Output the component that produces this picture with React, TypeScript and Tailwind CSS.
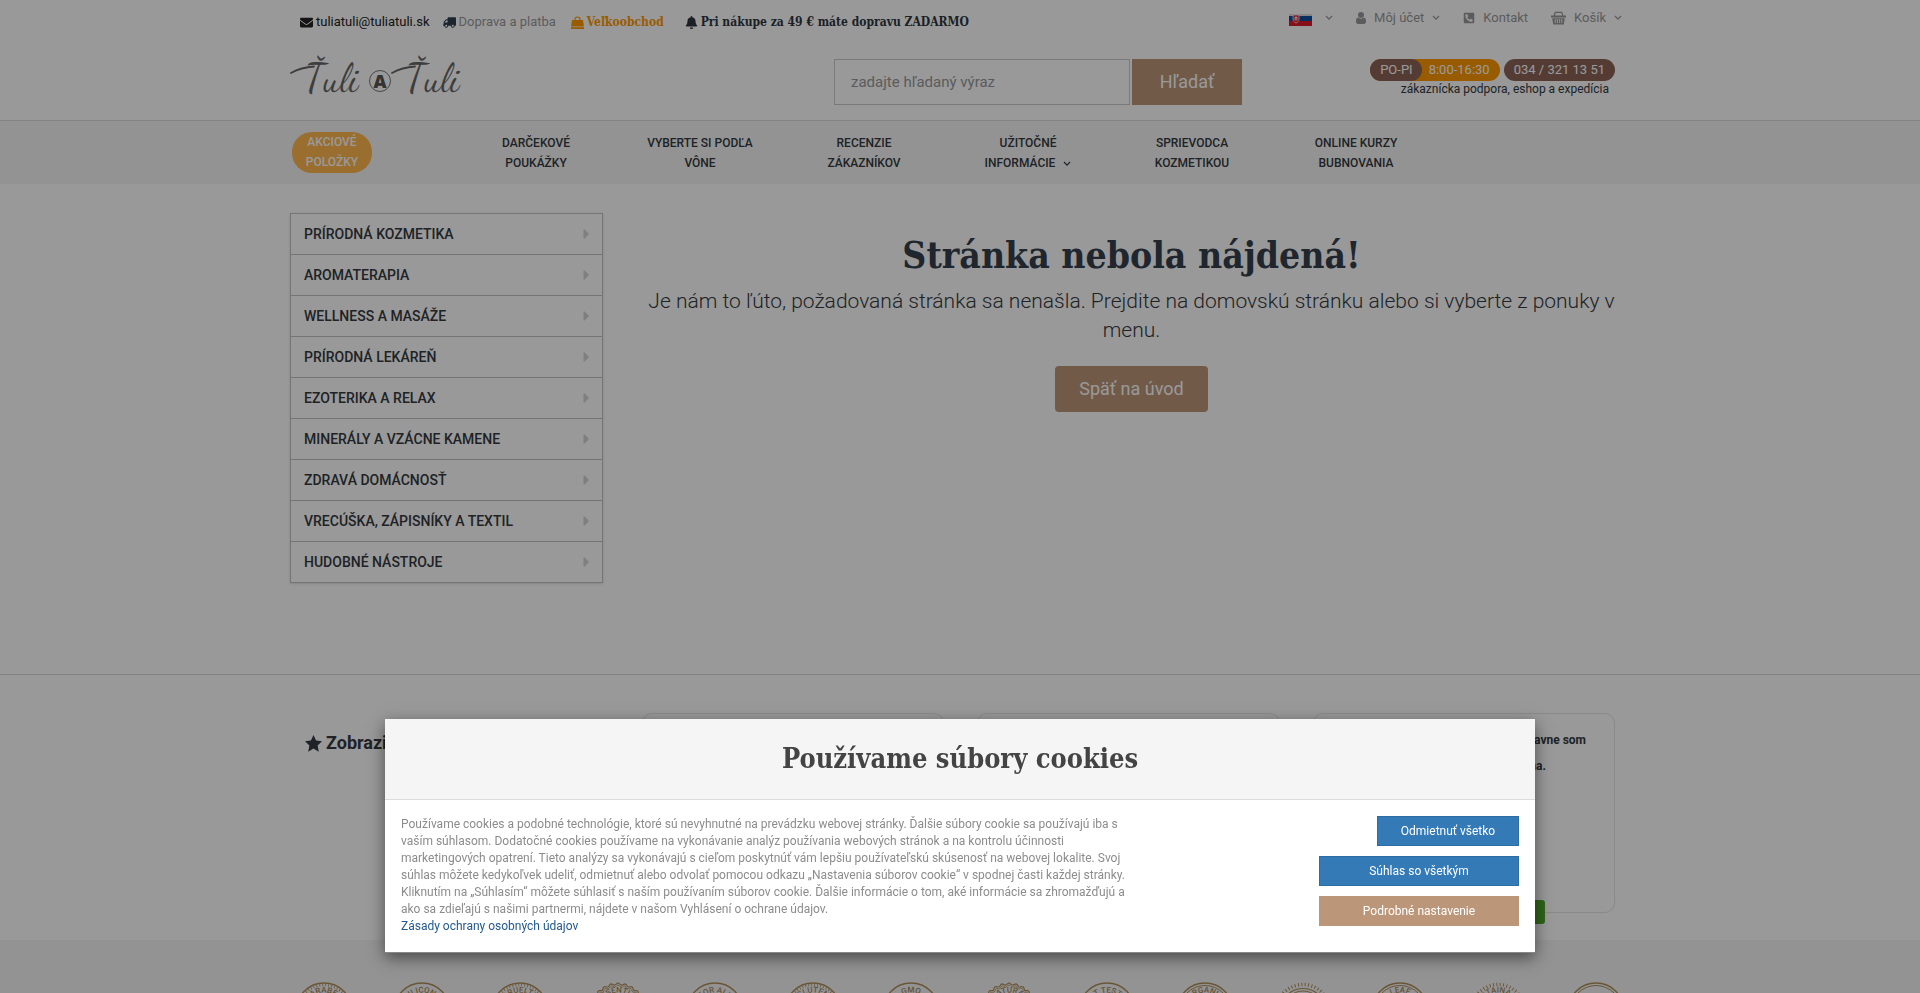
import type { ReactNode } from "react";
import { FaBell, FaCaretRight, FaEnvelope, FaPhoneSquareAlt, FaTruck } from "react-icons/fa";

const navItems = [
  { lines: ["Darčekové", "poukážky"] },
  { lines: ["Vyberte si podľa", "vône"] },
  { lines: ["Recenzie", "zákazníkov"] },
  { lines: ["Užitočné", "informácie"], dropdown: true },
  { lines: ["Sprievodca", "kozmetikou"] },
  { lines: ["Online kurzy", "bubnovania"] },
];

const categories = [
  "Prírodná kozmetika",
  "Aromaterapia",
  "Wellness a masáže",
  "Prírodná lekáreň",
  "Ezoterika a relax",
  "Minerály a vzácne kamene",
  "Zdravá domácnosť",
  "Vrecúška, zápisníky a textil",
  "Hudobné nástroje",
];

type SealEdge = "ring" | "ticks" | "wave" | "rays" | "double";

const seals: { label: string; edge: SealEdge }[] = [
  { label: "PARABEN", edge: "ticks" },
  { label: "SILICONE", edge: "ring" },
  { label: "CRUELTY", edge: "ticks" },
  { label: "ESSENTIAL", edge: "wave" },
  { label: "FOR ALL", edge: "ring" },
  { label: "GLUTEN", edge: "ticks" },
  { label: "GMO", edge: "ring" },
  { label: "NATURAL", edge: "wave" },
  { label: "NOT TESTED", edge: "ring" },
  { label: "ORGANIC", edge: "double" },
  { label: "", edge: "rays" },
  { label: "LEAF", edge: "double" },
  { label: "SUSTAINABLE", edge: "rays" },
  { label: "", edge: "double" },
];

export default function App() {
  return (
    <div className="h-screen overflow-hidden bg-white font-[Roboto,'Open_Sans',sans-serif] text-[#343a40]">
      <Header />
      <MainNav />
      <main>
        <div className="mx-auto flex max-w-[1370px] gap-[30px] px-[15px] pt-[29px] pb-[91px]">
          <Categories />
          <NotFound />
        </div>
        <Reviews />
      </main>
      <Seals />
      <div className="fixed inset-0 bg-black/40" />
      <CookieDialog />
    </div>
  );
}

function Header() {
  return (
    <header className="mx-auto h-[120px] max-w-[1370px] px-[15px]">
      <div className="flex h-[59px] items-start justify-between">
        <div className="flex items-center pt-3 pl-[10px] text-[13px] leading-5">
          <a href="#mail" className="flex items-center gap-[3px] text-[#222]">
            <FaEnvelope />
            tuliatuli@tuliatuli.sk
          </a>
          <a href="#doprava" className="ml-[13px] flex items-center gap-[3px] text-[#9a9a9a]">
            <FaTruck className="-scale-x-100 text-[#2c3e50]" />
            Doprava a platba
          </a>
          <a href="#velkoobchod" className="ml-[15px] flex items-center gap-[3px] font-['DejaVu_Serif_Condensed','DejaVu_Serif',serif] text-xs font-bold text-[#ff9800]">
            <Bag />
            Veľkoobchod
          </a>
          <span className="ml-[21px] flex items-center gap-[3px] font-['DejaVu_Serif_Condensed','DejaVu_Serif',serif] text-xs font-bold text-[#2e3640]">
            <FaBell className="text-[13px]" />
            Pri nákupe za 49 € máte dopravu ZADARMO
          </span>
        </div>
        <div className="flex items-center gap-[23px] pt-2 pr-2 text-[13px] leading-5 text-[#999]">
          <button type="button" aria-label="Jazyk" className="flex items-center gap-[13px]">
            <Flag />
            <AngleDown />
          </button>
          <button type="button" className="flex items-center gap-2">
            <User />
            Môj účet
            <AngleDown />
          </button>
          <a href="#kontakt" className="flex items-center gap-2">
            <FaPhoneSquareAlt className="h-3 w-3" />
            Kontakt
          </a>
          <button type="button" className="flex items-center gap-2">
            <Basket />
            Košík
            <AngleDown />
          </button>
        </div>
      </div>
      <div className="flex items-start">
        <a href="#home" aria-label="Ťuli a Ťuli">
          <Logo />
        </a>
        <form className="ml-[364px] flex gap-[2px]">
          <input
            type="text"
            aria-label="zadajte hľadaný výraz"
            placeholder="zadajte hľadaný výraz"
            className="h-[46px] w-[296px] border border-[#ccc] bg-white px-4 text-[15px] placeholder:text-[#999]"
          />
          <button type="button" className="h-[46px] w-[110px] bg-[#bc9678] text-lg text-white">
            Hľadať
          </button>
        </form>
        <div className="ml-auto pr-[15px] text-[13px] text-white">
          <div className="flex gap-1">
            <span className="flex rounded-full bg-[#ff9800]">
              <span className="rounded-full bg-[#8d6558] pr-[9px] pl-[10px] leading-[22px]">PO-PI</span>
              <span className="pr-[10px] pl-[7px] leading-[22px]">8:00-16:30</span>
            </span>
            <a href="#tel" className="rounded-full bg-[#8d6558] px-[10px] leading-[22px]">034 / 321 13 51</a>
          </div>
          <p className="pr-[6px] text-right text-xs leading-4 text-[#343a40]">zákaznícka podpora, eshop a expedícia</p>
        </div>
      </div>
    </header>
  );
}

function MainNav() {
  return (
    <nav className="border-t border-[#d9d9d9] bg-[#f6f6f6] text-xs leading-5 font-medium uppercase">
      <ul className="mx-auto flex h-[63px] max-w-[1370px] px-[15px] text-center">
        <li className="w-[164px] pt-[11px] pl-[2px]">
          <a href="#akcie" className="block h-[41px] w-[80px] rounded-[20px] bg-[#ffb74d] text-white">
            Akciové
            <br />
            položky
          </a>
        </li>
        {navItems.map(({ lines, dropdown }) => (
          <li key={lines[0]} className="w-[164px] pt-3">
            <a href="#menu">
              {lines[0]}
              <br />
              {lines[1]}
              {dropdown && <AngleDown className="ml-2 inline-block" />}
            </a>
          </li>
        ))}
      </ul>
    </nav>
  );
}

function Categories() {
  return (
    <aside className="w-[313px] shrink-0">
      <ul className="border border-b-0 border-[#c4c4c4] shadow-sm">
        {categories.map((name) => (
          <li key={name} className="border-b border-[#c4c4c4]">
            <a href="#kategoria" className="flex h-10 items-center justify-between pr-3 pl-[13px] text-sm font-medium uppercase">
              {name}
              <FaCaretRight className="h-4 w-[7px] text-[#d4d4d4]" />
            </a>
          </li>
        ))}
      </ul>
    </aside>
  );
}

function NotFound() {
  return (
    <section className="flex-1 pt-[19px] text-center">
      <h1 className="font-['DejaVu_Serif_Condensed','DejaVu_Serif',serif] text-[37px] leading-[46px] font-bold text-[#34404e]">
        Stránka nebola nájdená!
      </h1>
      <p className="mt-[9px] text-[21px] leading-[29px] font-light">
        Je nám to ľúto, požadovaná stránka sa nenašla. Prejdite na domovskú stránku alebo si vyberte z ponuky v menu.
      </p>
      <a href="#home" className="mt-[21px] inline-block rounded bg-[#bc9678] px-6 text-lg leading-[46px] text-white">
        Späť na úvod
      </a>
    </section>
  );
}

function Reviews() {
  return (
    <section className="border-t border-[#d9d9d9]">
      <div className="mx-auto flex max-w-[1370px] px-[15px] pt-[38px] pb-[27px]">
        <h2 className="flex w-[352px] shrink-0 items-center gap-1 self-start pt-[18px] pl-[15px] text-lg leading-6 font-bold">
          <Star />
          Zobraziť
        </h2>
        <div className="mr-[15px] grid flex-1 grid-cols-3 gap-[33px]">
          <ReviewCard />
          <ReviewCard />
          <ReviewCard>
            <p className="pt-[13px] pr-7 text-right text-xs leading-[26px] font-bold">
              Hlavne som
              <span className="block pr-10">spokojna.</span>
            </p>
            <span className="absolute right-[69px] -bottom-3 h-6 w-32 rounded-[3px] bg-[#50a72f]" />
          </ReviewCard>
        </div>
      </div>
    </section>
  );
}

function ReviewCard({ children }: { children?: ReactNode }) {
  return <article className="relative h-[200px] rounded-[10px] border border-[#e4e4e4]">{children}</article>;
}

function Seals() {
  return (
    <footer className="bg-[#f6f6f6] pt-[42px] pb-10">
      <ul className="mx-auto flex max-w-[1370px]">
        {seals.map((seal, i) => (
          <li key={i} className="flex flex-1 justify-center">
            <Seal id={`seal-${i}`} {...seal} />
          </li>
        ))}
      </ul>
    </footer>
  );
}

function Seal({ id, label, edge }: { id: string; label: string; edge: SealEdge }) {
  return (
    <svg viewBox="0 0 58 58" className="h-[58px] w-[58px]" fill="none" stroke="#b08f5c">
      {edge === "ring" && <circle cx="29" cy="29" r="28" strokeWidth="1.4" />}
      {edge === "ticks" && (
        <>
          <circle cx="29" cy="29" r="28" strokeWidth="1.4" />
          <circle cx="29" cy="29" r="26" strokeWidth="2.4" strokeDasharray="0.8 2.2" />
        </>
      )}
      {edge === "wave" && (
        <>
          <path d={scallop(28, 26)} strokeWidth="1.2" />
          <path d={scallop(26, 24)} strokeWidth="0.8" />
        </>
      )}
      {edge === "rays" && (
        <>
          <circle cx="29" cy="29" r="26.5" strokeWidth="3.4" strokeDasharray="1 2.4" />
          {!label && <circle cx="29" cy="29" r="22.5" strokeWidth="1.2" />}
          {!label && <circle cx="29" cy="29" r="20" />}
        </>
      )}
      {edge === "double" && (
        <>
          <circle cx="29" cy="29" r="28" strokeWidth="1.4" />
          <circle cx="29" cy="29" r="25.5" strokeWidth="1" />
        </>
      )}
      <path id={id} d="M10.500 29a18.500 18.500 0 0 1 37 0" stroke="none" />
      {label && (
        <text fill="#a58a5e" stroke="none" className="text-[8px] font-medium">
          <textPath href={`#${id}`} startOffset="50%" textAnchor="middle">
            {label}
          </textPath>
        </text>
      )}
    </svg>
  );
}

// Closed wavy outline that swings between the two radii.
function scallop(outer: number, inner: number) {
  const points = Array.from({ length: 144 }, (_, i) => {
    const angle = (i / 144) * Math.PI * 2;
    const radius = (outer + inner) / 2 + ((outer - inner) / 2) * Math.cos(angle * 24);
    return `${(29 + radius * Math.sin(angle)).toFixed(2)} ${(29 - radius * Math.cos(angle)).toFixed(2)}`;
  });
  return `M${points.join("L")}Z`;
}

function CookieDialog() {
  return (
    <div className="fixed inset-x-0 bottom-10 flex justify-center">
      <div
        role="dialog"
        aria-labelledby="cookie-title"
        className="w-full max-w-[1150px] border-b border-[#888] bg-white text-xs shadow-[0_5px_15px_rgba(0,0,0,0.5)]"
      >
        <h2
          id="cookie-title"
          className="border-b border-[#ddd] bg-[#f5f5f5] text-center font-['DejaVu_Serif_Condensed','DejaVu_Serif',serif] text-[27px] leading-[80px] font-bold text-[#444]"
        >
          Používame súbory cookies
        </h2>
        <div className="flex justify-between p-4 pb-[17px]">
          <div className="max-w-[727px] leading-[17px] text-[#8c8c8c]">
            <p>
              Používame cookies a podobné technológie, ktoré sú nevyhnutné na prevádzku webovej stránky. Ďalšie súbory cookie sa
              používajú iba s vaším súhlasom. Dodatočné cookies používame na vykonávanie analýz používania webových stránok a na
              kontrolu účinnosti marketingových opatrení. Tieto analýzy sa vykonávajú s cieľom poskytnúť vám lepšiu používateľskú
              skúsenosť na webovej lokalite. Svoj súhlas môžete kedykoľvek udeliť, odmietnuť alebo odvolať pomocou odkazu
              „Nastavenia súborov cookie“ v spodnej časti každej stránky. Kliknutím na „Súhlasím“ môžete súhlasiť s naším
              používaním súborov cookie. Ďalšie informácie o tom, aké informácie sa zhromažďujú a ako sa zdieľajú s našimi
              partnermi, nájdete v našom Vyhlásení o ochrane údajov.
            </p>
            <a href="#zasady" className="text-[#23598f]">
              Zásady ochrany osobných údajov
            </a>
          </div>
          <div className="flex flex-col items-end gap-[10px] text-white">
            <button type="button" className="h-[30px] w-[142px] border border-[#2e6da4] bg-[#337ab7]">
              Odmietnuť všetko
            </button>
            <button type="button" className="h-[30px] w-[200px] border border-[#2e6da4] bg-[#337ab7]">
              Súhlas so všetkým
            </button>
            <button type="button" className="h-[30px] w-[200px] bg-[#bc9678]">
              Podrobné nastavenie
            </button>
          </div>
        </div>
      </div>
    </div>
  );
}

function Logo() {
  return (
    <svg viewBox="0 0 180 40" className="h-10 w-[180px] overflow-visible">
      <g fill="#666" className="font-['Dancing_Script',cursive] text-[38px]">
        <text x="15" y="32">Ťuli</text>
        <text x="116" y="32">Ťuli</text>
      </g>
      <g fill="none" stroke="#666" strokeWidth="1.8" strokeLinecap="round">
        <path d="M1 14C8 10 14 8 24 7.500" />
        <path d="M102 14C109 10 115 8 125 7.500" />
      </g>
      <circle cx="90" cy="22" r="10.500" fill="none" stroke="#777" />
      <text x="90" y="29" textAnchor="middle" fill="#555" className="font-['Open_Sans'] text-[18px] font-extrabold">
        A
      </text>
    </svg>
  );
}

function AngleDown({ className = "" }: { className?: string }) {
  return (
    <svg viewBox="0 0 8 6" className={`h-[6px] w-2 ${className}`} fill="none" stroke="currentColor" strokeWidth="1.2">
      <path d="M1 1l3 3.200L7 1" />
    </svg>
  );
}

function Star() {
  return (
    <svg viewBox="0 0 17 17" className="h-[17px] w-[17px]" fill="currentColor">
      <path d="M8.500 0l2.600 5.600 5.900.7-4.400 4.200 1.200 6.200-5.300-3.100-5.300 3.100 1.200-6.200L0 6.300l5.900-.7z" />
    </svg>
  );
}

function User() {
  return (
    <svg viewBox="0 0 10 12" className="h-3 w-[10px]" fill="currentColor">
      <circle cx="5" cy="3" r="3" />
      <path d="M2 5.500C.5 5.800 0 7.500 0 9.500 0 11 .8 12 2 12h6c1.200 0 2-1 2-2.500 0-2-.5-3.700-2-4-1.500 1.500-4.500 1.500-6 0z" />
    </svg>
  );
}

function Bag() {
  return (
    <svg viewBox="0 0 13 13" className="h-[13px] w-[13px]" fill="currentColor">
      <path d="M1 4h11l.9 6.500H.1z" />
      <path d="M0 11.200h13V13H0z" />
      <path d="M4 5.500V3.200C4 .2 9 .2 9 3.200v2.300" fill="none" stroke="currentColor" strokeWidth="1.1" />
    </svg>
  );
}

function Flag() {
  return (
    <svg viewBox="0 0 23 12" className="mt-1 h-3 w-[23px]">
      <path fill="#ddd" d="M0 0h23v4H0z" />
      <path fill="#0b4ea2" d="M0 2h23v6H0z" />
      <path fill="#e01a2b" d="M0 7h23v5H0z" />
      <path fill="#e01a2b" stroke="#fff" strokeWidth="0.7" d="M4 1h6v4c0 2-1 3-3 4-2-1-3-2-3-4z" />
      <path fill="none" stroke="#fff" strokeWidth="0.8" d="M7 2v5M5.500 3.500h3M5 5h4" />
    </svg>
  );
}

function Basket() {
  return (
    <svg viewBox="0 0 15 14" className="h-[14px] w-[15px]" fill="none" stroke="currentColor">
      <path strokeWidth="1.2" d="M3 5.500 4.200 1.300h6.600L12 5.500" />
      <path fill="currentColor" stroke="none" d="M0 4.500h15v2H0zM1.200 7.200h12.600l-1 6.300H2.200z" />
      <path stroke="#fff" strokeWidth="0.9" d="M4.200 8v4M6.400 8v4M8.600 8v4M10.800 8v4" />
    </svg>
  );
}
